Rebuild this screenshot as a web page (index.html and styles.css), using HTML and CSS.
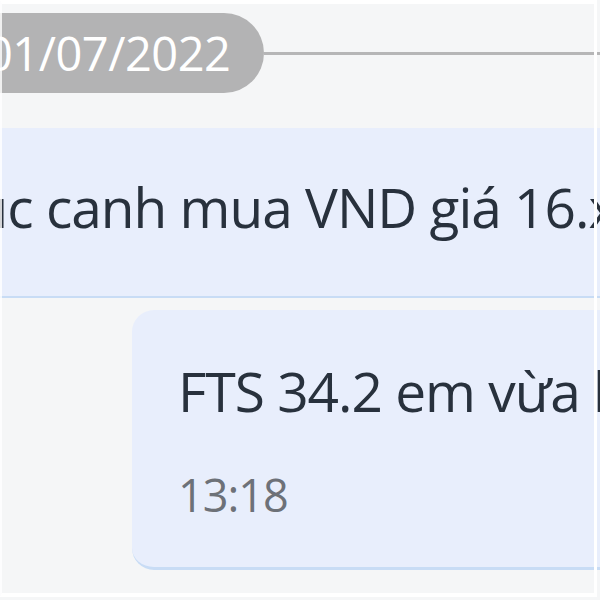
FILE: index.html
```html
<!DOCTYPE html>
<html lang="vi">
<head>
    <meta charset="UTF-8">
    <title>Tin nhắn</title>
    <link rel="stylesheet" href="styles.css">
</head>
<body>
<div class="chat">
    <div class="date-row">
        <span class="date-pill">01/07/2022</span>
        <span class="date-line"></span>
    </div>

    <div class="msg msg-wide">
        <p class="msg-text">Tiếp tục canh mua VND giá 16.xx</p>
    </div>

    <div class="msg msg-own">
        <p class="msg-text">FTS 34.2 em vừa khớp</p>
        <span class="msg-time">13:18</span>
    </div>
</div>
</body>
</html>
```

FILE: styles.css
```css
body {
    margin: 0;
    padding: 0;
    background: #f5f6f7;
    font-family: 'Open Sans', 'Noto Sans', sans-serif;
}

.chat {
    position: relative;
    width: 600px;
    height: 600px;
    overflow: hidden;
    padding-top: 13px;
    box-sizing: border-box;
}

/* khung trắng mỏng bao quanh */
.chat::after {
    content: '';
    position: absolute;
    top: 0;
    left: 0;
    width: 597px;
    height: 597px;
    box-sizing: border-box;
    border-top: 4px solid #ffffff;
    border-left: 2px solid rgba(255, 255, 255, 0.8);
    border-right: 3px solid #ffffff;
    border-bottom: 4px solid #ffffff;
    pointer-events: none;
}

.date-row {
    display: flex;
    align-items: center;
}

.date-pill {
    height: 80px;
    line-height: 80px;
    margin-left: -64px;
    padding: 0 34px 0 50px;
    background: #b3b3b4;
    border-radius: 0 40px 40px 0;
    color: #ffffff;
    font-size: 47px;
    letter-spacing: -0.5px;
    white-space: nowrap;
}

.date-line {
    flex: 1;
    height: 3px;
    margin-top: 1px;
    background: #b6b6b7;
}

.msg {
    background: #e8eefc;
    border-bottom: 2px solid #c8dcf5;
    white-space: nowrap;
}

.msg-text {
    margin: 0;
    color: #28313d;
    font-size: 55px;
    line-height: 75px;
    letter-spacing: -1px;
}

.msg-wide {
    margin-top: 35px;
    margin-left: -162px;
    padding: 41px 0 52px 0;
}

.msg-own {
    margin-top: 12px;
    margin-left: 132px;
    padding: 43px 0 41px 46px;
    border-bottom-width: 3px;
    border-radius: 22px 0 0 22px;
    display: flex;
    flex-direction: column;
    gap: 35px;
}

.msg-time {
    color: #6d7178;
    font-size: 45px;
    line-height: 63px;
    letter-spacing: -1px;
}
```
